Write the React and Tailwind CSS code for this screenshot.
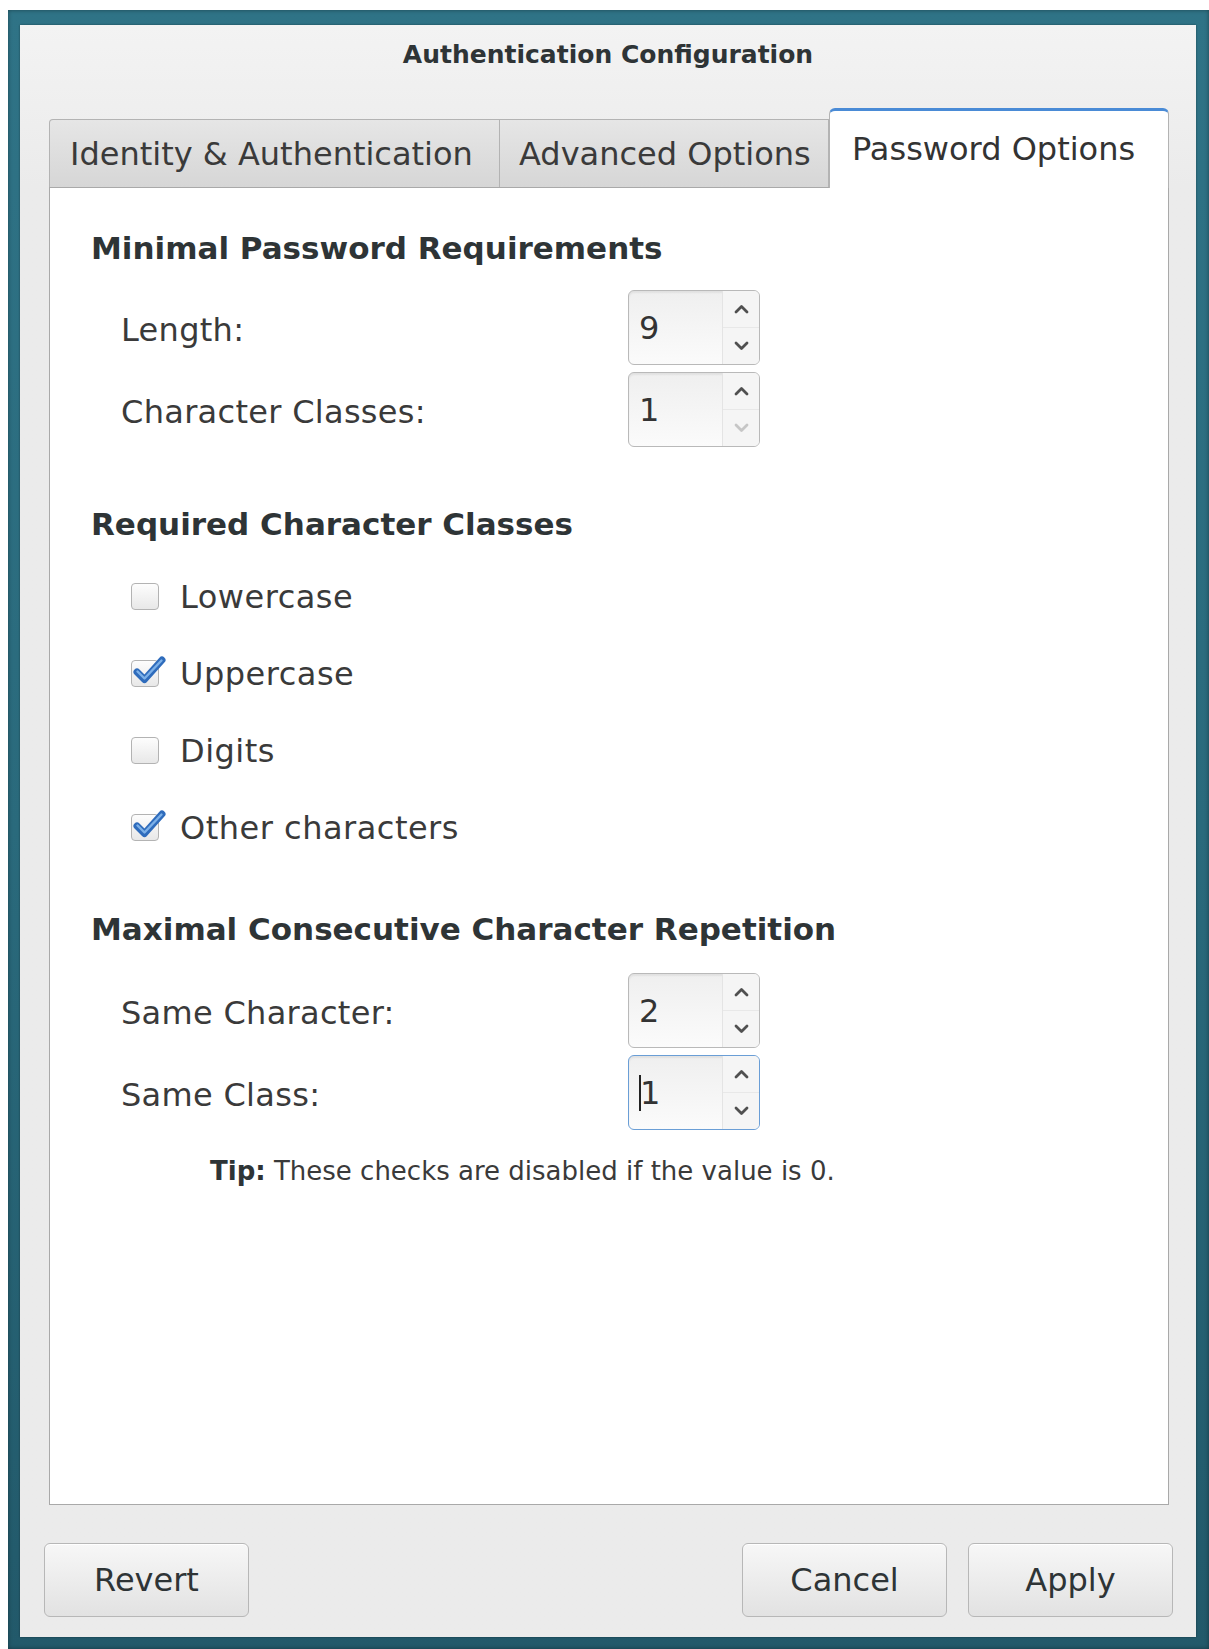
import React from "react";

function Chevron({ up, disabled }) {
  return (
    <svg width="15" height="10" viewBox="0 0 15 10">
      <path
        d={up ? "M2 8 L7.5 2.5 L13 8" : "M2 2 L7.5 7.5 L13 2"}
        fill="none"
        stroke={disabled ? "#c6c6c6" : "#505050"}
        strokeWidth="2.8"
        strokeLinecap="round"
        strokeLinejoin="round"
      />
    </svg>
  );
}

function SpinBox({ value, focused, downDisabled }) {
  return (
    <div
      className={`flex h-[75px] w-[132px] overflow-hidden rounded-[6px] border ${
        focused ? "border-[#6a9ed6]" : "border-[#b9b9b9]"
      } bg-gradient-to-b from-[#efefef] to-[#fbfbfb] shadow-[inset_0_2px_2px_rgba(0,0,0,0.06)]`}
    >
      <div className="flex flex-1 items-center pl-[10px] text-[32px] text-[#333333]">
        {focused && <span className="mr-[-1px] h-[36px] w-[2px] bg-[#222222]" />}
        {value}
      </div>
      <div className="flex w-[37px] flex-col border-l border-[#e4e4e4] bg-[#f5f5f5]">
        <div className="flex flex-1 items-center justify-center border-b border-[#e8e8e8]">
          <Chevron up />
        </div>
        <div className="flex flex-1 items-center justify-center">
          <Chevron disabled={downDisabled} />
        </div>
      </div>
    </div>
  );
}

function CheckBox({ checked }) {
  return (
    <div className="relative h-[27px] w-[28px] shrink-0 rounded-[4px] border border-[#b3b3b3] bg-gradient-to-b from-[#fdfdfd] to-[#e8e8e8]">
      {checked && (
        <svg className="absolute left-[1px] top-[-7px]" width="34" height="34" viewBox="0 0 34 34">
          <path
            d="M4 18 L11.5 25.5 L29 6"
            fill="none"
            stroke="#2f6cbc"
            strokeWidth="7"
            strokeLinecap="round"
            strokeLinejoin="round"
          />
          <path
            d="M4.5 17.5 L11.5 24.5 L28.5 6.5"
            fill="none"
            stroke="#7cb0e8"
            strokeWidth="2.4"
            strokeLinecap="round"
            strokeLinejoin="round"
          />
        </svg>
      )}
    </div>
  );
}

function Button({ children }) {
  return (
    <div className="flex h-[74px] w-[205px] items-center justify-center rounded-[6px] border border-[#b7b7b7] bg-gradient-to-b from-[#f7f7f7] to-[#e2e2e2] text-[32px] text-[#2e3436] shadow-[inset_0_1px_0_rgba(255,255,255,0.9)]">
      {children}
    </div>
  );
}

function SpinRow({ label, value, focused, downDisabled }) {
  return (
    <div className="flex items-center">
      <div className="w-[507px] pt-[4px] text-[32px] tracking-[0.3px] text-[#3a3a3a]">{label}</div>
      <SpinBox value={value} focused={focused} downDisabled={downDisabled} />
    </div>
  );
}

function CheckRow({ label, checked }) {
  return (
    <div className="flex h-[77px] items-center pl-[81px]">
      <CheckBox checked={checked} />
      <span className="ml-[21px] text-[32px] tracking-[0.5px] text-[#3a3a3a]">{label}</span>
    </div>
  );
}

export default function App() {
  return (
    <div className="min-h-[1649px] w-[1209px] bg-white font-['DejaVu_Sans',sans-serif]">
      {/* window frame */}
      <div className="ml-[8px] mt-[10px] h-[1639px] w-[1201px] bg-gradient-to-b from-[#2f7386] via-[#2a6a7c] to-[#22596a] pb-[12px] pl-[12px] pr-[13px] pt-[15px] shadow-[inset_0_0_4px_rgba(0,0,0,0.4)]">
        <div className="flex h-[1612px] w-[1176px] flex-col bg-gradient-to-b from-[#f3f3f3] to-[#ebebeb] to-[10%] shadow-[0_0_2px_rgba(0,0,0,0.4)]">
          {/* title */}
          <div className="flex h-[60px] items-center justify-center text-[25px] font-bold text-[#2e3436]">
            Authentication Configuration
          </div>

          {/* notebook */}
          <div className="ml-[29px] mt-[23px] w-[1120px]">
            <div className="flex h-[79px] items-end">
              <div className="flex h-[68px] w-[451px] items-center rounded-tl-[4px] border border-b-0 border-[#b3b3b3] bg-gradient-to-b from-[#e6e6e6] to-[#d6d6d6] pl-[20px] text-[32px] text-[#3a3a3a]">
                Identity &amp; Authentication
              </div>
              <div className="flex h-[68px] w-[329px] items-center border border-b-0 border-l-0 border-[#b3b3b3] bg-gradient-to-b from-[#e6e6e6] to-[#d6d6d6] pl-[19px] text-[32px] text-[#3a3a3a]">
                Advanced Options
              </div>
              <div className="relative z-10 mb-[-1px] flex h-[80px] w-[340px] items-center rounded-t-[6px] border border-b-0 border-t-[3px] border-[#b3b3b3] border-t-[#4a8bd6] bg-white pb-[1px] pl-[22px] text-[32px] text-[#333333]">
                Password Options
              </div>
            </div>

            <div className="flex h-[1318px] flex-col border border-[#a9a9a9] bg-white">
              <div className="mt-[40px] flex h-[40px] items-center pl-[41px] text-[31px] font-bold text-[#2e3436]">
                Minimal Password Requirements
              </div>
              <div className="mt-[22px] flex flex-col gap-[7px] pl-[71px]">
                <SpinRow label="Length:" value="9" />
                <SpinRow label="Character Classes:" value="1" downDisabled />
              </div>

              <div className="mt-[57px] flex h-[40px] items-center pl-[41px] text-[31px] font-bold text-[#2e3436]">
                Required Character Classes
              </div>
              <div className="mt-[14px] flex flex-col">
                <CheckRow label="Lowercase" />
                <CheckRow label="Uppercase" checked />
                <CheckRow label="Digits" />
                <CheckRow label="Other characters" checked />
              </div>

              <div className="mt-[43px] flex h-[40px] items-center pl-[41px] text-[31px] font-bold text-[#2e3436]">
                Maximal Consecutive Character Repetition
              </div>
              <div className="mt-[24px] flex flex-col gap-[7px] pl-[71px]">
                <SpinRow label="Same Character:" value="2" />
                <SpinRow label="Same Class:" value="1" focused />
              </div>

              <div className="mt-[24px] flex h-[34px] items-center pl-[160px] text-[26px] text-[#3a3a3a]">
                <span className="font-bold text-[#2e3436]">Tip:</span>
                <span>&nbsp;These checks are disabled if the value is 0.</span>
              </div>
            </div>
          </div>

          {/* action buttons */}
          <div className="mt-[38px] flex items-center pl-[24px] pr-[23px]">
            <Button>Revert</Button>
            <div className="flex-1" />
            <div className="flex gap-[21px]">
              <Button>Cancel</Button>
              <Button>Apply</Button>
            </div>
          </div>
        </div>
      </div>
    </div>
  );
}
